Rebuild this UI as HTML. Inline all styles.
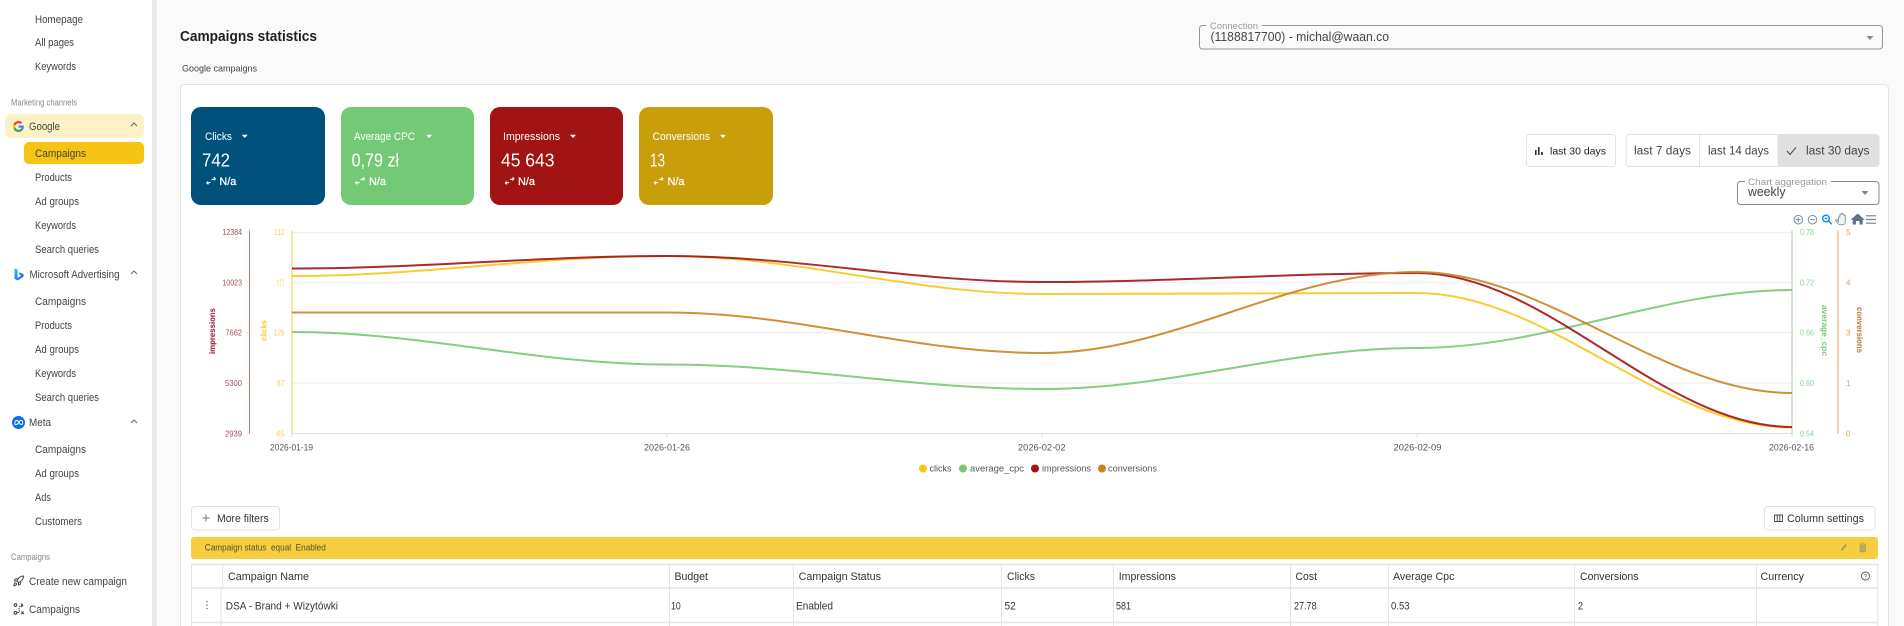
<!DOCTYPE html>
<html lang="en">
<head>
<meta charset="utf-8">
<title>Campaigns statistics</title>
<style>
html,body{margin:0;padding:0;width:1904px;height:626px;overflow:hidden;background:#fafafa}
svg{display:block}
text{font-family:"Liberation Sans","DejaVu Sans",sans-serif;white-space:pre}
.n{font-size:11px;fill:#444}
.s{font-size:9px;fill:#8b8b8b}
.st{font-size:11px;fill:#fff}
.v{font-size:18.5px;fill:#fff}
.na{font-size:11px;fill:#fff;stroke:#fff;stroke-width:.25}
.ax{font-size:8px}
.x{font-size:9px;fill:#555}
.th{font-size:11px;fill:#333}
.td{font-size:11px;fill:#333}
.b{font-size:11.5px;fill:#444}
</style>
</head>
<body>
<svg width="1904" height="626" viewBox="0 0 1904 626" xmlns="http://www.w3.org/2000/svg">
<defs>
<linearGradient id="bing" x1="0" y1="0" x2="1" y2="1"><stop offset="0" stop-color="#37bdff"/><stop offset=".6" stop-color="#2a7be8"/><stop offset="1" stop-color="#1b48ef"/></linearGradient>
<g id="swap" fill="none" stroke="#fff" stroke-width="1.1">
<path d="M-4.5 2.2l4-.8M-4.500 2.200l1.600-1.800M-4.500 2.200l2 1.100"/>
<path d="M4.500 -2.200l-4 .8M4.500 -2.200l-1.600 -1.500M4.500 -2.200l-1.800 1.500"/>
</g>
</defs>
<!-- sidebar -->
<rect x="0" y="0" width="152" height="626" fill="#fff"/>
<rect x="152" y="0" width="5" height="626" fill="#e9e9e9"/>
<rect x="157" y="0" width="1747" height="626" fill="#fafafa"/>
<g class="nav">
<text class="n" x="35" y="23" textLength="48" lengthAdjust="spacingAndGlyphs">Homepage</text>
<text class="n" x="35" y="46" textLength="39" lengthAdjust="spacingAndGlyphs">All pages</text>
<text class="n" x="35" y="70" textLength="41" lengthAdjust="spacingAndGlyphs">Keywords</text>
<text class="s" x="11" y="105.5" textLength="66" lengthAdjust="spacingAndGlyphs">Marketing channels</text>
<rect x="5" y="114" width="139" height="24" rx="6" fill="#fdf1c8"/>
<g transform="translate(12.5,120.5) scale(.5)">
<path fill="#4285F4" d="M22.56 12.25c0-.78-.07-1.53-.2-2.25H12v4.26h5.92c-.26 1.37-1.04 2.53-2.21 3.31v2.77h3.57c2.08-1.92 3.28-4.74 3.28-8.09z"/>
<path fill="#34A853" d="M12 23c2.97 0 5.46-.98 7.28-2.66l-3.57-2.77c-.98.66-2.23 1.06-3.71 1.06-2.86 0-5.29-1.93-6.16-4.53H2.18v2.84C3.99 20.53 7.7 23 12 23z"/>
<path fill="#FBBC05" d="M5.84 14.09c-.22-.66-.35-1.36-.35-2.09s.13-1.43.35-2.09V7.07H2.18C1.43 8.55 1 10.22 1 12s.43 3.45 1.18 4.93l2.85-2.22.81-.62z"/>
<path fill="#EA4335" d="M12 5.38c1.62 0 3.06.56 4.21 1.64l3.15-3.15C17.45 2.09 14.97 1 12 1 7.7 1 3.99 3.47 2.18 7.07l3.66 2.84c.87-2.6 3.3-4.53 6.16-4.53z"/>
</g>
<text class="n" x="29" y="130" textLength="31" lengthAdjust="spacingAndGlyphs">Google</text>
<path d="M131 126l3-3 3 3" fill="none" stroke="#666" stroke-width="1"/>
<rect x="24" y="142" width="120" height="22" rx="5" fill="#f5c311"/>
<text class="n" x="35" y="157" textLength="51" lengthAdjust="spacingAndGlyphs">Campaigns</text>
<text class="n" x="35" y="181" textLength="37" lengthAdjust="spacingAndGlyphs">Products</text>
<text class="n" x="35" y="205" textLength="44" lengthAdjust="spacingAndGlyphs">Ad groups</text>
<text class="n" x="35" y="229" textLength="41" lengthAdjust="spacingAndGlyphs">Keywords</text>
<text class="n" x="35" y="253" textLength="64" lengthAdjust="spacingAndGlyphs">Search queries</text>
<path d="M14.5 268.5l3 1.1v8.4l4-2.2-2-.9-1-2.6 5 1.7v2.8l-6 3.7-3-1.6z" fill="url(#bing)"/>
<text class="n" x="29.5" y="278" textLength="90" lengthAdjust="spacingAndGlyphs">Microsoft Advertising</text>
<path d="M131 274l3-3 3 3" fill="none" stroke="#666" stroke-width="1"/>
<text class="n" x="35" y="305" textLength="51" lengthAdjust="spacingAndGlyphs">Campaigns</text>
<text class="n" x="35" y="329" textLength="37" lengthAdjust="spacingAndGlyphs">Products</text>
<text class="n" x="35" y="353" textLength="44" lengthAdjust="spacingAndGlyphs">Ad groups</text>
<text class="n" x="35" y="377" textLength="41" lengthAdjust="spacingAndGlyphs">Keywords</text>
<text class="n" x="35" y="401" textLength="64" lengthAdjust="spacingAndGlyphs">Search queries</text>
<circle cx="18.5" cy="422.5" r="6.5" fill="#0a6fe8"/>
<path d="M14.800 424.200c0-3 1.200-3.800 2-3.800 1.500 0 2.600 4.200 4.500 4.200 1 0 1.400-.7 1.400-1.700 0-1.800-.9-2.500-1.700-2.500-1.700 0-3 4.200-4.600 4.200-.9 0-1.600-.4-1.600-.4z" fill="none" stroke="#fff" stroke-width="1"/>
<text class="n" x="29" y="426" textLength="22" lengthAdjust="spacingAndGlyphs">Meta</text>
<path d="M131 423l3-3 3 3" fill="none" stroke="#666" stroke-width="1"/>
<text class="n" x="35" y="453" textLength="51" lengthAdjust="spacingAndGlyphs">Campaigns</text>
<text class="n" x="35" y="477" textLength="44" lengthAdjust="spacingAndGlyphs">Ad groups</text>
<text class="n" x="35" y="501" textLength="16" lengthAdjust="spacingAndGlyphs">Ads</text>
<text class="n" x="35" y="525" textLength="47" lengthAdjust="spacingAndGlyphs">Customers</text>
<text class="s" x="11" y="560" textLength="39" lengthAdjust="spacingAndGlyphs">Campaigns</text>
<g transform="translate(12.5,575) scale(.5)" fill="none" stroke="#444" stroke-width="2" stroke-linecap="round" stroke-linejoin="round">
<path d="M4.5 16.5c-1.5 1.26-2 5-2 5s3.74-.5 5-2c.71-.84.7-2.13-.09-2.91a2.18 2.18 0 0 0-2.91-.09z"/>
<path d="m12 15-3-3a22 22 0 0 1 2-3.95A12.88 12.88 0 0 1 22 2c0 2.72-.78 7.5-6 11a22.35 22.35 0 0 1-4 2z"/>
<path d="M9 12H4s.55-3.03 2-4c1.62-1.08 5 0 5 0"/>
<path d="M12 15v5s3.03-.55 4-2c1.08-1.62 0-5 0-5"/>
</g>
<text class="n" x="29" y="585" textLength="98" lengthAdjust="spacingAndGlyphs">Create new campaign</text>
<g fill="none" stroke="#444" stroke-width="1.100">
<circle cx="15.500" cy="605" r="1.300"/><circle cx="15.500" cy="612.800" r="1.400"/>
<path d="M17.500 612.500c3 0 1.500-2.500 1.500-4s.8-3 2.800-3" stroke-dasharray="1.400 .8"/>
<path d="M21 603.500l1.800 1.800-1.800 1.800M21.300 611.500l2.400 2.600M23.700 611.500l-2.400 2.600"/>
</g>
<text class="n" x="29" y="613" textLength="51" lengthAdjust="spacingAndGlyphs">Campaigns</text>
</g>

<!-- header -->
<text x="180" y="41" font-size="14.5" font-weight="bold" fill="#1f1f1f" textLength="137" lengthAdjust="spacingAndGlyphs">Campaigns statistics</text>
<text x="182" y="71.5" font-size="9.5" fill="#444" textLength="75" lengthAdjust="spacingAndGlyphs">Google campaigns</text>
<rect x="1199.5" y="25.5" width="683" height="23.5" rx="3" fill="none" stroke="#949494"/>
<rect x="1206" y="24" width="56" height="3" fill="#fafafa"/>
<text x="1210" y="29" font-size="9" fill="#999" textLength="48" lengthAdjust="spacingAndGlyphs">Connection</text>
<text x="1210.5" y="41" font-size="13" fill="#444" textLength="178.5" lengthAdjust="spacingAndGlyphs">(1188817700) - michal@waan.co</text>
<path d="M1866.5 36h7l-3.5 4z" fill="#888"/>

<!-- main card -->
<rect x="180.5" y="84.5" width="1708" height="560" rx="4" fill="#fff" stroke="#e3e3e3"/>

<!-- stat cards -->
<rect x="191" y="107" width="134" height="98" rx="10" fill="#00507c"/>
<rect x="341" y="107" width="133" height="98" rx="10" fill="#74c976"/>
<rect x="490" y="107" width="133" height="98" rx="10" fill="#a21413"/>
<rect x="639" y="107" width="134" height="98" rx="10" fill="#c89e0b"/>
<text class="st" x="205" y="140" textLength="27" lengthAdjust="spacingAndGlyphs">Clicks</text>
<text class="st" x="354" y="140" textLength="61" lengthAdjust="spacingAndGlyphs">Average CPC</text>
<text class="st" x="503" y="140" textLength="57" lengthAdjust="spacingAndGlyphs">Impressions</text>
<text class="st" x="652.5" y="140" textLength="57.5" lengthAdjust="spacingAndGlyphs">Conversions</text>
<g fill="#fff">
<path d="M241.7 134.8h6l-3 3.2z"/><path d="M426 134.8h6l-3 3.2z"/><path d="M570 134.8h6l-3 3.2z"/><path d="M720 134.8h6l-3 3.2z"/>
</g>
<text class="v" x="202" y="166.5" textLength="28" lengthAdjust="spacingAndGlyphs">742</text>
<text class="v" x="351.6" y="166.5" textLength="47.5" lengthAdjust="spacingAndGlyphs">0,79 zł</text>
<text class="v" x="501" y="166.5" textLength="53.5" lengthAdjust="spacingAndGlyphs">45 643</text>
<text class="v" x="650" y="166.5" textLength="15" lengthAdjust="spacingAndGlyphs">13</text>
<text class="na" x="219.4" y="185" textLength="17" lengthAdjust="spacingAndGlyphs">N/a</text>
<text class="na" x="369" y="185" textLength="17" lengthAdjust="spacingAndGlyphs">N/a</text>
<text class="na" x="518" y="185" textLength="17" lengthAdjust="spacingAndGlyphs">N/a</text>
<text class="na" x="667.5" y="185" textLength="17" lengthAdjust="spacingAndGlyphs">N/a</text>
<use href="#swap" x="211" y="181"/>
<use href="#swap" x="360" y="181"/>
<use href="#swap" x="509.6" y="181"/>
<use href="#swap" x="658.6" y="181"/>

<!-- date buttons -->
<rect x="1526.5" y="134.5" width="89" height="32" rx="3" fill="#fff" stroke="#e2e2e2"/>
<g fill="#333"><rect x="1535" y="150" width="1.6" height="5"/><rect x="1538" y="147" width="1.6" height="8"/><rect x="1541" y="152" width="1.8" height="3"/></g>
<text x="1550" y="154.5" font-size="10" fill="#222" textLength="56" lengthAdjust="spacingAndGlyphs">last 30 days</text>
<rect x="1778" y="134.5" width="101" height="32" rx="3" fill="#e0e0e0"/>
<rect x="1626" y="134.5" width="253" height="32" rx="3" fill="none" stroke="#e2e2e2"/>
<path d="M1699.5 135v31M1778 135v31" stroke="#e2e2e2"/>
<text class="b" x="1634" y="154.5" textLength="57" lengthAdjust="spacingAndGlyphs">last 7 days</text>
<text class="b" x="1708" y="154.5" textLength="61" lengthAdjust="spacingAndGlyphs">last 14 days</text>
<path d="M1787 151l3 3.5 6-7" fill="none" stroke="#444" stroke-width="1"/>
<text class="b" x="1806" y="154.5" textLength="63.5" lengthAdjust="spacingAndGlyphs">last 30 days</text>
<rect x="1737.5" y="181.5" width="141.5" height="23" rx="3" fill="#fff" stroke="#888"/>
<rect x="1745" y="180" width="86" height="3" fill="#fff"/>
<text x="1748" y="185" font-size="9" fill="#999" textLength="79" lengthAdjust="spacingAndGlyphs">Chart aggregation</text>
<text x="1748" y="196" font-size="13" fill="#444" textLength="37.5" lengthAdjust="spacingAndGlyphs">weekly</text>
<path d="M1861.5 191h7l-3.5 4z" fill="#888"/>

<!-- chart toolbar -->
<g fill="none" stroke="#6e8192" stroke-width=".9">
<circle cx="1798.3" cy="219.7" r="4.3"/><path d="M1795.800 219.700h5M1798.300 217.200v5"/>
<circle cx="1812.500" cy="219.700" r="4.300"/><path d="M1810 219.700h5"/>
</g>
<g fill="none" stroke="#008ffb" stroke-width="1.400"><circle cx="1826" cy="218.500" r="3.300"/><path d="M1828.500 221l3.300 3.300"/><path d="M1824.500 218.500h3M1826 217v3" stroke-width=".8"/></g>
<path d="M1838.500 221.500v-4c0-1 1.300-1 1.300 0v-2.700c0-1 1.400-1 1.400 0v-.8c0-1 1.400-1 1.400 0v.8c0-1 1.400-1 1.400 0v1c0-.9 1.300-.9 1.300 0v6c0 1.700-1 3-2.600 3h-2.400c-1.500 0-2.400-1-3-2l-1.600-2.500c-.4-.8.8-1.300 1.300-.5z" fill="#f2f4f5" stroke="#8f9ba6" stroke-width="1"/>
<path d="M1856 224.500v-3.500h3.500v3.500h3.200v-4.800h2l-7-6.200-7 6.200h2v4.800z" fill="#5f7285"/>
<path d="M1866 215.800h10M1866 219.500h10M1866 223.200h10" stroke="#6e8192" stroke-width="1.200"/>

<!-- chart grid -->
<g stroke="#efefef" stroke-width="1.200" fill="none">
<path d="M292 232.500H1792M292 282.500H1792M292 332.500H1792M292 383H1792"/>
</g>
<path d="M292 433.500H1792" stroke="#e3e3e3" stroke-width="1.200"/>
<path d="M292 433v4M667 433v4M1042 433v4M1417 433v4M1792 433v4" stroke="#ddd"/>
<!-- axes -->
<path d="M249.500 230.500V434" stroke="#c27374" stroke-width="1"/>
<path d="M247 232h2.500M247 282.500h2.500M247 332.500h2.500M247 383h2.500M247 433.500h2.500" stroke="#ddd"/>
<path d="M292 230.500V434" stroke="#fde08a" stroke-width="1.600"/>
<path d="M1792 230.500V434" stroke="#cfe9cf" stroke-width="2"/>
<path d="M1838 230.500V434" stroke="#efc69f" stroke-width="1.600"/>
<g class="ax" fill="#a84a58">
<text x="222.400" y="234.800" textLength="19.600" lengthAdjust="spacingAndGlyphs">12384</text>
<text x="222.400" y="285.300" textLength="19.600" lengthAdjust="spacingAndGlyphs">10023</text>
<text x="225.400" y="335.300" textLength="16.600" lengthAdjust="spacingAndGlyphs">7662</text>
<text x="225" y="385.800" textLength="17" lengthAdjust="spacingAndGlyphs">5300</text>
<text x="225" y="436.300" textLength="17" lengthAdjust="spacingAndGlyphs">2939</text>
</g>
<g class="ax" fill="#f9cf5d">
<text x="274" y="234.800" textLength="10.500" lengthAdjust="spacingAndGlyphs">213</text>
<text x="276.500" y="285.300" textLength="8" lengthAdjust="spacingAndGlyphs">171</text>
<text x="274" y="335.300" textLength="10.500" lengthAdjust="spacingAndGlyphs">129</text>
<text x="276.500" y="385.800" textLength="8" lengthAdjust="spacingAndGlyphs">87</text>
<text x="276" y="436.300" textLength="8.500" lengthAdjust="spacingAndGlyphs">45</text>
</g>
<g class="ax" fill="#8fd391">
<text x="1800" y="234.800" textLength="14" lengthAdjust="spacingAndGlyphs">0.78</text>
<text x="1800" y="285.300" textLength="14" lengthAdjust="spacingAndGlyphs">0.72</text>
<text x="1800" y="335.300" textLength="14" lengthAdjust="spacingAndGlyphs">0.66</text>
<text x="1800" y="385.800" textLength="14" lengthAdjust="spacingAndGlyphs">0.60</text>
<text x="1800" y="436.300" textLength="14" lengthAdjust="spacingAndGlyphs">0.54</text>
</g>
<g class="ax" fill="#e0a265">
<text x="1846" y="234.800">5</text><text x="1846" y="285.300">4</text><text x="1846" y="335.300">3</text><text x="1846" y="385.800">1</text><text x="1846" y="436.300">0</text>
</g>
<text x="0" y="0" transform="translate(215,354) rotate(-90)" font-size="8.500" font-weight="bold" fill="#a21433" textLength="46" lengthAdjust="spacingAndGlyphs">impressions</text>
<text x="0" y="0" transform="translate(266.500,341) rotate(-90)" font-size="8.500" font-weight="bold" fill="#f8c82e" textLength="21" lengthAdjust="spacingAndGlyphs">clicks</text>
<text x="0" y="0" transform="translate(1822,305) rotate(90)" font-size="8.500" font-weight="bold" fill="#74c976" textLength="51" lengthAdjust="spacingAndGlyphs">average_cpc</text>
<text x="0" y="0" transform="translate(1857,307) rotate(90)" font-size="8.500" font-weight="bold" fill="#c9742a" textLength="46" lengthAdjust="spacingAndGlyphs">conversions</text>
<!-- series -->
<g fill="none" stroke-width="2" stroke-opacity=".9">
<path stroke="#f7c61c" d="M292 276C423 276 536 256 667 256C798 256 911 294 1042 294C1173 294 1286 293 1417 293C1548 293 1661 427.500 1792 427.500"/>
<path stroke="#74c976" d="M292 332C423 332 536 364.500 667 364.500C798 364.500 911 389 1042 389C1173 389 1286 348 1417 348C1548 348 1661 290 1792 290"/>
<path stroke="#a21413" d="M292 268.500C423 268.500 536 256 667 256C798 256 911 282 1042 282C1173 282 1286 273 1417 273C1548 273 1661 427 1792 427"/>
<path stroke="#cb8421" d="M292 312.500C423 312.500 536 312.500 667 312.500C798 312.500 911 353 1042 353C1173 353 1286 272 1417 272C1548 272 1661 393 1792 393"/>
</g>
<text class="x" x="270" y="450.500" textLength="43" lengthAdjust="spacingAndGlyphs">2026-01-19</text>
<text class="x" x="644" y="450.500" textLength="46" lengthAdjust="spacingAndGlyphs">2026-01-26</text>
<text class="x" x="1018" y="450.500" textLength="47.500" lengthAdjust="spacingAndGlyphs">2026-02-02</text>
<text class="x" x="1393.500" y="450.500" textLength="48" lengthAdjust="spacingAndGlyphs">2026-02-09</text>
<text class="x" x="1769" y="450.500" textLength="45" lengthAdjust="spacingAndGlyphs">2026-02-16</text>
<!-- legend -->
<circle cx="923" cy="468.500" r="4" fill="#f7c61c"/><text class="x" x="929.500" y="471.500" textLength="22" lengthAdjust="spacingAndGlyphs">clicks</text>
<circle cx="963" cy="468.500" r="4" fill="#74c976"/><text class="x" x="970" y="471.500" textLength="54" lengthAdjust="spacingAndGlyphs">average_cpc</text>
<circle cx="1035" cy="468.500" r="4" fill="#a21413"/><text class="x" x="1042" y="471.500" textLength="49" lengthAdjust="spacingAndGlyphs">impressions</text>
<circle cx="1102" cy="468.500" r="4" fill="#cb8421"/><text class="x" x="1108" y="471.500" textLength="49" lengthAdjust="spacingAndGlyphs">conversions</text>

<!-- filter row -->
<rect x="191.500" y="506.500" width="88" height="23.500" rx="3" fill="#fff" stroke="#e2e2e2"/>
<path d="M206 514.500v7M202.500 518h7" stroke="#777" stroke-width="1"/>
<text x="217" y="522" font-size="11" fill="#333" textLength="51.700" lengthAdjust="spacingAndGlyphs">More filters</text>
<rect x="1764.500" y="506.500" width="110.500" height="23.500" rx="3" fill="#fff" stroke="#e2e2e2"/>
<path d="M1774.500 515h8v6.500h-8zM1777.200 515v6.500M1779.800 515v6.500" fill="none" stroke="#444" stroke-width=".9"/>
<text x="1787" y="522" font-size="11" fill="#333" textLength="77" lengthAdjust="spacingAndGlyphs">Column settings</text>
<rect x="191" y="537" width="1687" height="22" rx="3" fill="#f6ce3f"/>
<text x="204.800" y="550.500" font-size="9" fill="#5a5028" textLength="121" lengthAdjust="spacingAndGlyphs">Campaign status  equal  Enabled</text>
<path d="M1841 551l.5-2.500 4-4.500 1.500 1.300-4 4.500z" fill="#a89a5c"/>
<path d="M1860 545h5.500v7h-5.500zM1859 544h7.500M1861.500 543h2.500" fill="#bca95a" stroke="#a89a5c" stroke-width=".6"/>

<!-- table -->
<rect x="191" y="564" width="1687" height="62" fill="#fff"/>
<g fill="none" stroke="#e4e4e4">
<path stroke-width="1.500" d="M191 564.500H1878M191 588H1878M191 622.500H1878"/>
<path d="M191.500 564v62M1878 564v62M222.700 564v24M221 588v38M669.500 564v62M793.500 564v62M1001.500 564v62M1113.500 564v62M1290.500 564v62M1388.500 564v62M1574.500 564v62M1756.500 564v62"/>
</g>
<text class="th" x="228" y="580" textLength="81" lengthAdjust="spacingAndGlyphs">Campaign Name</text>
<text class="th" x="674.500" y="580" textLength="33.500" lengthAdjust="spacingAndGlyphs">Budget</text>
<text class="th" x="798.600" y="580" textLength="82.400" lengthAdjust="spacingAndGlyphs">Campaign Status</text>
<text class="th" x="1007" y="580" textLength="28" lengthAdjust="spacingAndGlyphs">Clicks</text>
<text class="th" x="1118.700" y="580" textLength="57.300" lengthAdjust="spacingAndGlyphs">Impressions</text>
<text class="th" x="1295.500" y="580" textLength="21.500" lengthAdjust="spacingAndGlyphs">Cost</text>
<text class="th" x="1393" y="580" textLength="61.400" lengthAdjust="spacingAndGlyphs">Average Cpc</text>
<text class="th" x="1580" y="580" textLength="58.500" lengthAdjust="spacingAndGlyphs">Conversions</text>
<text class="th" x="1760.500" y="580" textLength="43.500" lengthAdjust="spacingAndGlyphs">Currency</text>
<circle cx="1865.500" cy="576" r="4" fill="none" stroke="#555" stroke-width=".9"/>
<text x="1863.700" y="578.500" font-size="6.500" fill="#555">?</text>
<g fill="#777"><circle cx="207" cy="601.500" r=".8"/><circle cx="207" cy="605" r=".8"/><circle cx="207" cy="608.500" r=".8"/></g>
<text class="td" x="225.800" y="609.500" textLength="112.200" lengthAdjust="spacingAndGlyphs">DSA - Brand + Wizytówki</text>
<text class="td" x="671" y="609.500" textLength="9.700" lengthAdjust="spacingAndGlyphs">10</text>
<text class="td" x="796" y="609.500" textLength="37" lengthAdjust="spacingAndGlyphs">Enabled</text>
<text class="td" x="1004.500" y="609.500" textLength="11.300" lengthAdjust="spacingAndGlyphs">52</text>
<text class="td" x="1116" y="609.500" textLength="15" lengthAdjust="spacingAndGlyphs">581</text>
<text class="td" x="1294" y="609.500" textLength="22.600" lengthAdjust="spacingAndGlyphs">27.78</text>
<text class="td" x="1391" y="609.500" textLength="18.600" lengthAdjust="spacingAndGlyphs">0.53</text>
<text class="td" x="1578" y="609.500" textLength="5" lengthAdjust="spacingAndGlyphs">2</text>
</svg>
</body>
</html>
